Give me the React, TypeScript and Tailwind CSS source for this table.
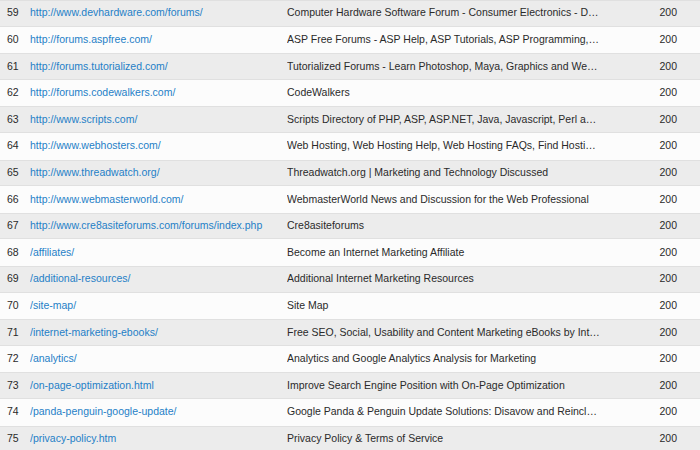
const rows: [number, string, string][] = [
  [59, "http://www.devhardware.com/forums/", "Computer Hardware Software Forum - Consumer Electronics - Digital Cameras"],
  [60, "http://forums.aspfree.com/", "ASP Free Forums - ASP Help, ASP Tutorials, ASP Programming, ASP Code"],
  [61, "http://forums.tutorialized.com/", "Tutorialized Forums - Learn Photoshop, Maya, Graphics and Web Design"],
  [62, "http://forums.codewalkers.com/", "CodeWalkers"],
  [63, "http://www.scripts.com/", "Scripts Directory of PHP, ASP, ASP.NET, Java, Javascript, Perl and more"],
  [64, "http://www.webhosters.com/", "Web Hosting, Web Hosting Help, Web Hosting FAQs, Find Hosting Solutions"],
  [65, "http://www.threadwatch.org/", "Threadwatch.org | Marketing and Technology Discussed"],
  [66, "http://www.webmasterworld.com/", "WebmasterWorld News and Discussion for the Web Professional"],
  [67, "http://www.cre8asiteforums.com/forums/index.php", "Cre8asiteforums"],
  [68, "/affiliates/", "Become an Internet Marketing Affiliate"],
  [69, "/additional-resources/", "Additional Internet Marketing Resources"],
  [70, "/site-map/", "Site Map"],
  [71, "/internet-marketing-ebooks/", "Free SEO, Social, Usability and Content Marketing eBooks by Internet Marketing Ninjas"],
  [72, "/analytics/", "Analytics and Google Analytics Analysis for Marketing"],
  [73, "/on-page-optimization.html", "Improve Search Engine Position with On-Page Optimization"],
  [74, "/panda-penguin-google-update/", "Google Panda & Penguin Update Solutions: Disavow and Reinclusion"],
  [75, "/privacy-policy.htm", "Privacy Policy & Terms of Service"],
]

export default function App() {
  return (
    <div className="w-[700px] h-[450px] overflow-hidden bg-white font-['Liberation_Sans',Arial,sans-serif] text-[10.5px] text-[#2a2a2a]">
      {rows.map(([n, url, title]) => {
        const grey = n % 2 === 1
        return (
          <div
            key={n}
            className={
              grey
                ? "flex items-center h-[26.6px] bg-[#ececec] border-t border-b border-[#e0e0e0]"
                : "flex items-center h-[26.6px] bg-[#fcfcfc]"
            }
          >
            <div className="w-[30px] pl-[7px] shrink-0">{n}</div>
            <div className="w-[257px] shrink-0 text-[#1f7fc7] truncate">{url}</div>
            <div className="w-[313px] shrink-0 truncate">{title}</div>
            <div className="w-[77px] shrink-0 text-right">200</div>
          </div>
        )
      })}
    </div>
  )
}
